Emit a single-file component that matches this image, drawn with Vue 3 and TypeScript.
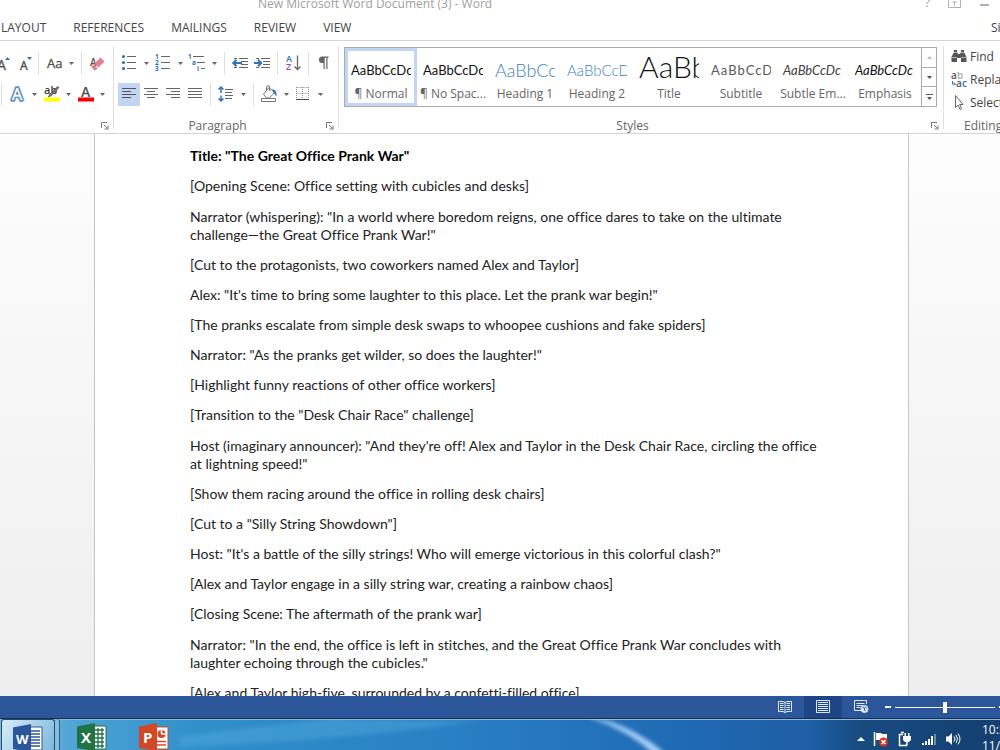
<script setup lang="ts">
interface Tool {
  id: string
  name: string
  menu?: boolean
  sepBefore?: boolean
  active?: boolean
}

const tabs: string[] = ['LAYOUT', 'REFERENCES', 'MAILINGS', 'REVIEW', 'VIEW']

const fontRows: Tool[][] = [
  [
    { id: 'grow', name: 'Grow font' },
    { id: 'shrink', name: 'Shrink font' },
    { id: 'case', name: 'Change case', menu: true, sepBefore: true },
    { id: 'clear', name: 'Clear formatting', sepBefore: true },
  ],
  [
    { id: 'effects', name: 'Text effects', menu: true, sepBefore: true },
    { id: 'highlight', name: 'Highlight colour', menu: true },
    { id: 'color', name: 'Font colour', menu: true },
  ],
]

const paragraphRows: Tool[][] = [
  [
    { id: 'bullets', name: 'Bullets', menu: true },
    { id: 'numbers', name: 'Numbering', menu: true },
    { id: 'multilevel', name: 'Multilevel list', menu: true },
    { id: 'outdent', name: 'Decrease indent', sepBefore: true },
    { id: 'indent', name: 'Increase indent' },
    { id: 'sort', name: 'Sort', sepBefore: true },
    { id: 'marks', name: 'Show paragraph marks', sepBefore: true },
  ],
  [
    { id: 'left', name: 'Align left', active: true },
    { id: 'center', name: 'Center' },
    { id: 'right', name: 'Align right' },
    { id: 'justify', name: 'Justify' },
    { id: 'spacing', name: 'Line spacing', menu: true, sepBefore: true },
    { id: 'shading', name: 'Shading', menu: true, sepBefore: true },
    { id: 'borders', name: 'Borders', menu: true },
  ],
]

const groups = [
  { name: '', key: 'font', rows: fontRows },
  { name: 'Paragraph', key: 'paragraph', rows: paragraphRows },
]

const sans = `font-family="Open Sans, sans-serif"`
const icons: Record<string, string> = {
  grow: `<text x="7" y="18" font-size="14" fill="#505050" stroke="#505050" stroke-width=".3" ${sans}>A</text><path d="M15 8l2.500-3 2.500 3z" fill="#2f73b7"/>`,
  shrink: `<text x="8" y="18" font-size="12" fill="#505050" stroke="#505050" stroke-width=".4" ${sans}>A</text><path d="M15 5h5l-2.500 3z" fill="#2f73b7"/>`,
  case: `<text x="4" y="16" font-size="13" fill="#505050" stroke="#505050" stroke-width=".3" ${sans}>Aa</text>`,
  clear: `<text x="4" y="14" font-size="10" font-weight="600" fill="#505050" ${sans}>A</text><path d="M14.500 5.500l4 4-6 6-4-4z" fill="#e57f90"/><path d="M7.700 12.300l4 4-2 2H8.200l-2.400-2.500v-1.600z" fill="#e57f90"/>`,
  effects: `<text x="6" y="17" font-size="16" font-weight="400" fill="none" stroke="#b7d3ee" stroke-width="4.500" stroke-linejoin="round" ${sans}>A</text><text x="6" y="17" font-size="16" font-weight="400" fill="#fff" stroke="#3b78b5" stroke-width="2.800" stroke-linejoin="round" ${sans}>A</text><text x="6" y="17" font-size="16" font-weight="400" fill="#fff" stroke="#fff" stroke-width=".5" ${sans}>A</text>`,
  highlight: `<text x="4" y="11" font-size="11" font-weight="600" fill="#404040" ${sans}>ab</text><path d="M19 4.500l-7.500 8-3 1.500 1-2.500 8-8z" fill="#777" stroke="#555" stroke-width=".8"/><path d="M4 14.500h16v4H4z" fill="#ff0"/>`,
  color: `<text x="7" y="13.500" font-size="14" font-weight="600" fill="#505050" ${sans}>A</text><path d="M4 14.500h16v4H4z" fill="#f00"/>`,
  bullets: `<g fill="#2f73b7"><circle cx="5.500" cy="4.500" r="1.600"/><circle cx="5.500" cy="10.500" r="1.600"/><circle cx="5.500" cy="16.500" r="1.600"/></g><path d="M9 4.500h9M9 10.500h9M9 16.500h9" stroke="#666" />`,
  numbers: `<g fill="#2f73b7" font-size="6.500" font-weight="700" ${sans}><text x="3" y="7">1</text><text x="3" y="13">2</text><text x="3" y="19">3</text></g><path d="M9 4.500h9M9 10.500h9M9 16.500h9" stroke="#666"/>`,
  multilevel: `<g fill="#2f73b7" font-size="6.500" font-weight="700" ${sans}><text x="2" y="7">1</text><text x="6" y="13">a</text><text x="11" y="19">i</text></g><path d="M7 4.500h11M11 10.500h8M15 16.500h4" stroke="#666"/>`,
  outdent: `<path d="M10 6.500h9M12 9.500h7M12 12.500h7M10 15.500h9M5 6.500h3M5 15.500h3" stroke="#666"/><path d="M13 11H5M7.500 7.800L4.300 11l3.200 3.200" fill="none" stroke="#2f73b7" stroke-width="2"/>`,
  indent: `<path d="M10 6.500h9M12 9.500h7M12 12.500h7M10 15.500h9M5 6.500h3M5 15.500h3" stroke="#666"/><path d="M3 11h7M7 7.800l3.200 3.200L7 14.200" fill="none" stroke="#2f73b7" stroke-width="2"/>`,
  sort: `<text x="4" y="10" font-size="9" font-weight="600" fill="#2f73b7" ${sans}>A</text><text x="4" y="18" font-size="9" font-weight="600" fill="#8a4fae" ${sans}>Z</text><path d="M15.500 3.500v14M12.500 14.500l3 3 3-3" fill="none" stroke="#666" stroke-width="1.300"/>`,
  marks: `<path d="M8.500 4.500h7v1.200h-1V17h-1.200V5.700h-1.600V17h-1.200v-6H9a3.300 3.300 0 0 1-.5-6.500z" fill="#666"/>`,
  left: `<path d="M4 5.500h14M4 8.500h9M4 11.500h14M4 14.500h9" stroke="#555"/>`,
  center: `<path d="M4 5.500h14M7 8.500h8M4 11.500h14M7 14.500h8" stroke="#666"/>`,
  right: `<path d="M4 5.500h14M9 8.500h9M4 11.500h14M9 14.500h9" stroke="#666"/>`,
  justify: `<path d="M4 5.500h14M4 8.500h14M4 11.500h14M4 14.500h14" stroke="#666"/>`,
  spacing: `<path d="M10 6.500h8M10 9.500h7M10 12.500h8M10 15.500h7" stroke="#666"/><path d="M6 4v6M6 12.500v6M3.500 6.500L6 4l2.500 2.500M3.500 15.500L6 18l2.500-2.500" fill="none" stroke="#2f73b7" stroke-width="1.500"/>`,
  shading: `<path d="M5.500 11L11 4.500l5.500 5-5 5.500h-3z" fill="#fff" stroke="#777"/><path d="M8.500 8V4.500a1.600 1.600 0 0 1 3.200 0V8" fill="none" stroke="#666"/><path d="M14 6.500c3-.5 5 2 4.500 7l-3-4z" fill="#2f73b7"/><path d="M3.500 15.500h14v3h-14z" fill="#fff" stroke="#777"/>`,
  borders: `<path d="M4.500 4.500h12M4.500 10.500h12M4.500 4v12M10.500 4v12M16.500 4v12" stroke="#888" stroke-dasharray="1 1"/><path d="M4 16.500h13" stroke="#444"/>`,
}

const styles = [
  { name: '¶ Normal', cls: 'normal', sample: 'AaBbCcDc', on: true },
  { name: '¶ No Spac...', cls: 'normal', sample: 'AaBbCcDc' },
  { name: 'Heading 1', cls: 'heading1', sample: 'AaBbCc' },
  { name: 'Heading 2', cls: 'heading2', sample: 'AaBbCcD' },
  { name: 'Title', cls: 'title', sample: 'AaBb' },
  { name: 'Subtitle', cls: 'subtitle', sample: 'AaBbCcD' },
  { name: 'Subtle Em...', cls: 'subtle', sample: 'AaBbCcDc' },
  { name: 'Emphasis', cls: 'emphasis', sample: 'AaBbCcDc' },
]

const script: { text: string; long?: boolean }[] = [
  { text: '[Opening Scene: Office setting with cubicles and desks]' },
  { text: 'Narrator (whispering): "In a world where boredom reigns, one office dares to take on the ultimate challenge—the Great Office Prank War!"', long: true },
  { text: '[Cut to the protagonists, two coworkers named Alex and Taylor]' },
  { text: 'Alex: "It\'s time to bring some laughter to this place. Let the prank war begin!"' },
  { text: '[The pranks escalate from simple desk swaps to whoopee cushions and fake spiders]' },
  { text: 'Narrator: "As the pranks get wilder, so does the laughter!"' },
  { text: '[Highlight funny reactions of other office workers]' },
  { text: '[Transition to the "Desk Chair Race" challenge]' },
  { text: 'Host (imaginary announcer): "And they\'re off! Alex and Taylor in the Desk Chair Race, circling the office at lightning speed!"', long: true },
  { text: '[Show them racing around the office in rolling desk chairs]' },
  { text: '[Cut to a "Silly String Showdown"]' },
  { text: 'Host: "It\'s a battle of the silly strings! Who will emerge victorious in this colorful clash?"' },
  { text: '[Alex and Taylor engage in a silly string war, creating a rainbow chaos]' },
  { text: '[Closing Scene: The aftermath of the prank war]' },
  { text: 'Narrator: "In the end, the office is left in stitches, and the Great Office Prank War concludes with laughter echoing through the cubicles."', long: true },
  { text: '[Alex and Taylor high-five, surrounded by a confetti-filled office]' },
]
</script>

<template>
  <div class="app">
    <header class="titlebar">
      <span class="doc-name">New Microsoft Word Document (3) - Word</span>
      <div class="window-tools">
        <button class="plain" aria-label="Help">?</button>
        <button class="plain" aria-label="Ribbon display options">
          <svg width="14" height="12" viewBox="0 0 14 12" fill="none" stroke="#b0b0b0"><path d="M.5.500h12v10H.500zM.500 2.500h12M6.500 9V4M4.500 6l2-2 2 2" /></svg>
        </button>
        <button class="plain" aria-label="Minimize">
          <svg width="10" height="12" viewBox="0 0 10 12"><path d="M0 7h9v2H0z" fill="#b0b0b0" /></svg>
        </button>
      </div>
    </header>

    <nav class="tabs">
      <button v-for="t in tabs" :key="t" class="plain tab">{{ t }}</button>
      <a class="signin" href="#">Sign in</a>
    </nav>

    <div class="ribbon">
      <section v-for="g in groups" :key="g.key" class="group" :class="g.key">
        <div class="rows">
          <div v-for="(row, r) in g.rows" :key="r" class="row">
            <template v-for="t in row" :key="t.id">
              <i v-if="t.sepBefore" class="sep"></i>
              <button class="plain tool" :class="{ active: t.active }" :aria-label="t.name">
                <svg width="22" height="23" viewBox="0 0 22 23" v-html="icons[t.id]"></svg>
              </button>
              <button v-if="t.menu" class="plain arrow" :aria-label="t.name + ' options'">
                <svg width="5" height="3" viewBox="0 0 5 3"><path d="M0 0h5L2.500 3z" fill="#666" /></svg>
              </button>
            </template>
          </div>
        </div>
        <footer class="caption">
          <span>{{ g.name }}</span>
          <button class="plain launcher" :aria-label="g.key + ' settings'">
            <svg width="8" height="8" viewBox="0 0 8 8" fill="none" stroke="#777"><path d="M.5 6V.500H6M3 3l3.500 3.500M7 3.500V7H3.500" /></svg>
          </button>
        </footer>
      </section>

      <section class="group styles">
        <div class="gallery">
          <button v-for="s in styles" :key="s.name" class="plain style" :class="{ on: s.on }">
            <span class="sample" :class="s.cls">{{ s.sample }}</span>
            <span class="style-name">{{ s.name }}</span>
          </button>
          <div class="scroller">
            <button class="plain" aria-label="Previous styles"><svg width="5" height="3" viewBox="0 0 5 3"><path d="M0 3h5L2.500 0z" fill="#bbb" /></svg></button>
            <button class="plain" aria-label="Next styles"><svg width="5" height="3" viewBox="0 0 5 3"><path d="M0 0h5L2.500 3z" fill="#555" /></svg></button>
            <button class="plain" aria-label="More styles"><svg width="7" height="6" viewBox="0 0 7 6"><path d="M0 0h7v1H0zM1 3h5L3.500 6z" fill="#555" /></svg></button>
          </div>
        </div>
        <footer class="caption">
          <span>Styles</span>
          <button class="plain launcher" aria-label="Styles settings">
            <svg width="8" height="8" viewBox="0 0 8 8" fill="none" stroke="#777"><path d="M.5 6V.500H6M3 3l3.500 3.500M7 3.500V7H3.500" /></svg>
          </button>
        </footer>
      </section>

      <section class="group editing">
        <div class="commands">
          <button class="plain command">
            <svg width="16" height="16" viewBox="0 0 16 16" fill="#555"><path d="M3 1h3v2l1 2h2l1-2V1h3v2l2.500 5v5H10V9H6v4H.500V8L3 3z" /><path d="M3 3.500h3M10 3.500h3M1 8.500h5M10 8.500h5" stroke="#ddd" stroke-width=".7" /></svg>
            <span>Find</span>
          </button>
          <button class="plain command">
            <svg width="16" height="16" viewBox="0 0 16 16" font-family="Open Sans, sans-serif" font-size="10" font-weight="600"><text x="0" y="7" fill="#555">a</text><text x="6" y="7" fill="#aaa">b</text><text x="5" y="15" fill="#555">a</text><text x="11" y="15" fill="#2f73b7">c</text><path d="M1.500 9v3H4M3 10.500L4.500 12 3 13.500" fill="none" stroke="#2f73b7" /></svg>
            <span>Replace</span>
          </button>
          <button class="plain command">
            <svg width="16" height="16" viewBox="0 0 16 16"><path d="M4.500.500v12l2.500-2.500 2 4.500 1.700-.8-2-4.200h3.300z" fill="#fff" stroke="#666" /></svg>
            <span>Select</span>
          </button>
        </div>
        <footer class="caption"><span>Editing</span></footer>
      </section>
    </div>

    <main class="workspace">
      <article class="page">
        <h1>Title: "The Great Office Prank War"</h1>
        <p v-for="(p, i) in script" :key="i" :class="{ long: p.long }">{{ p.text }}</p>
      </article>
    </main>

    <div class="statusbar">
      <button class="plain view" aria-label="Read mode">
        <svg width="14" height="14" viewBox="0 0 14 14" fill="none" stroke="#dfe8f5"><path d="M.5 1.500H5l2 1 2-1h4.500v10H9l-2 1-2-1H.500zM7 2v11M2 3.500h3.500M2 5.500h3.500M2 7.500h3.500M2 9.500h3.500M8.500 3.500H12M8.500 5.500H12M8.500 7.500H12M8.500 9.500H12" /></svg>
      </button>
      <button class="plain view current" aria-label="Print layout">
        <svg width="14" height="14" viewBox="0 0 14 14" fill="none" stroke="#dfe8f5"><path d="M.5.500h13v12H.500zM2 2.500h10M2 4.500h10M2 6.500h10M2 8.500h10M2 10.500h10" /></svg>
      </button>
      <button class="plain view" aria-label="Web layout">
        <svg width="15" height="14" viewBox="0 0 15 14" fill="none" stroke="#dfe8f5"><path d="M7 10.500H.500V.500h12V4M2.500 3.500h8M2.500 5.500h6M2.500 7.500h4" /><circle cx="10.500" cy="9" r="3.500" fill="#dfe8f5" /><path d="M8.500 7.500l2 .5v2l1 1M11 6.500l2 2" stroke="#2b579a" /></svg>
      </button>
      <button class="plain zoom-out" aria-label="Zoom out"></button>
      <input class="zoom" type="range" min="0" max="100" value="50" aria-label="Zoom" />
      <button class="plain zoom-in" aria-label="Zoom in"></button>
    </div>

    <div class="taskbar">
      <svg class="streak" viewBox="0 0 1000 32" preserveAspectRatio="none" aria-hidden="true">
        <defs>
          <filter id="soft" x="-20%" y="-50%" width="140%" height="200%"><feGaussianBlur stdDeviation="2" /></filter>
        </defs>
        <path d="M180 28Q330 24 480 2L330 0Q270 6 180 18z" fill="#5db4e0" opacity=".35" filter="url(#soft)" />
        <path d="M590-2Q634 6 672 42L654 36Q630 12 590-2z" fill="#a9d2fa" stroke="#a9d2fa" filter="url(#soft)" />
      </svg>
      <button class="plain task running" aria-label="Word">
        <svg width="30" height="28" viewBox="0 0 30 28"><path d="M16 3h13v23H16z" fill="#fff" stroke="#2b579a" /><path d="M18 7h9M18 10h9M18 13h9M18 16h9M18 19h9M18 22h9" stroke="#2b579a" stroke-width="1.300" /><path d="M0 3.500L18 0v28L0 25z" fill="#2b579a" /><text x="3" y="20" font-family="Open Sans, sans-serif" font-size="13" font-weight="700" fill="#fff">W</text></svg>
      </button>
      <button class="plain task" aria-label="Excel">
        <svg width="30" height="28" viewBox="0 0 30 28"><path d="M16 3h13v23H16z" fill="#fff" stroke="#217346" /><path d="M18 7h9M18 11h9M18 15h9M18 19h9M18 23h9M21 5v20M25 5v20" stroke="#217346" stroke-width="1.300" /><path d="M0 3.500L18 0v28L0 25z" fill="#217346" /><text x="4" y="20" font-family="Open Sans, sans-serif" font-size="15" font-weight="700" fill="#fff">X</text></svg>
      </button>
      <button class="plain task" aria-label="PowerPoint">
        <svg width="30" height="28" viewBox="0 0 30 28"><path d="M16 4h13v22H16z" fill="#fff" stroke="#d24726" /><circle cx="22.500" cy="11" r="4" fill="#d24726" /><path d="M22.500 11V6.500M22.500 11H27" stroke="#fff" stroke-width="1.500" /><path d="M18 18.500h9M18 22h9" stroke="#d24726" stroke-width="1.500" /><path d="M0 3.500L18 0v28L0 25z" fill="#d24726" /><text x="4" y="20" font-family="Open Sans, sans-serif" font-size="15" font-weight="700" fill="#fff">P</text></svg>
      </button>
      <div class="tray">
        <button class="plain" aria-label="Show hidden icons"><svg width="8" height="16" viewBox="0 0 8 16"><path d="M0 10h8L4 6z" fill="#fff" /></svg></button>
        <button class="plain" aria-label="Action center"><svg width="16" height="16" viewBox="0 0 16 16"><path d="M1.500 1v14" stroke="#fff" stroke-width="1.500" /><path d="M3 2h5l1 1h5v7H8L7 9H3z" fill="#fff" /><circle cx="10.500" cy="11" r="4.500" fill="#d8301f" /><path d="M8.500 9l4 4M12.500 9l-4 4" stroke="#fff" stroke-width="1.500" /></svg></button>
        <button class="plain" aria-label="Power"><svg width="16" height="16" viewBox="0 0 16 16"><path d="M6 3.500H2.500v11h7V13M4 1.500h3" fill="none" stroke="#fff" stroke-width="1.500" /><path d="M6 5h8v4l-2 2H8L6 9zM7.500 2h1.500v3H7.500zM11 2h1.500v3H11z" fill="#fff" /><path d="M10 11v3" stroke="#fff" stroke-width="1.500" /></svg></button>
        <button class="plain" aria-label="Network"><svg width="16" height="16" viewBox="0 0 16 16"><path d="M1 12h2v2H1zM4 10h2v4H4zM7 8h2v6H7zM10 5h2v9h-2z" fill="#fff" /><path d="M13 3h2v11h-2z" fill="#6f8dad" /></svg></button>
        <button class="plain" aria-label="Volume"><svg width="16" height="16" viewBox="0 0 16 16"><path d="M1 5.500h2.500L7 2v12l-3.500-3.500H1z" fill="#fff" /><path d="M9 5.500q2 2.500 0 5M11 4q3 4 0 8M13 2.500q4 5.500 0 11" fill="none" stroke="#fff" /></svg></button>
      </div>
      <div class="clock"><span>10:26 AM</span><span>11/6/2023</span></div>
    </div>
  </div>
</template>

<style>
html,
body {
  margin: 0;
  overflow: hidden;
}
</style>

<style scoped>
.app {
  height: 100vh;
  display: flex;
  flex-direction: column;
  overflow: hidden;
  background: #fff;
  color: #444;
  font: 12px/16px "Open Sans", "Noto Sans", sans-serif;
}
.plain {
  display: flex;
  align-items: center;
  justify-content: center;
  margin: 0;
  padding: 0;
  border: 0;
  background: none;
  color: inherit;
  font: inherit;
  white-space: nowrap;
}
svg {
  display: block;
  flex: none;
}
.titlebar {
  height: 16px;
  flex: none;
  display: flex;
  align-items: flex-start;
  color: #a0a0a0;
}
.doc-name {
  margin: -4px auto 0 258px;
}
.window-tools {
  display: flex;
  gap: 18px;
  margin: -5px 10px 0 0;
}
.tabs {
  height: 24px;
  flex: none;
  display: flex;
  align-items: center;
  gap: 27px;
  padding-left: 1px;
  border-bottom: 1px solid #d4d4d4;
}
.signin {
  margin-left: auto;
  width: 9px;
  overflow: hidden;
  color: inherit;
  text-decoration: none;
  white-space: nowrap;
}
.ribbon {
  height: 92px;
  flex: none;
  display: flex;
  border-bottom: 1px solid #d4d4d4;
}
.group {
  display: flex;
  flex-direction: column;
  justify-content: space-between;
  position: relative;
  flex: none;
  box-sizing: border-box;
  padding-top: 6px;
}
.group:not(.editing)::after {
  content: "";
  position: absolute;
  right: 0;
  top: 5px;
  bottom: 4px;
  width: 1px;
  background: #e1e1e1;
}
.font {
  width: 114px;
}
.paragraph {
  width: 225px;
}
.styles {
  flex: 1;
  min-width: 0;
}
.editing {
  width: 56px;
}
.rows {
  display: flex;
  flex-direction: column;
  gap: 8px;
  padding: 5px 6px 0 4px;
}
.row {
  display: flex;
  height: 23px;
}
.font .row {
  justify-content: flex-end;
}
.tool {
  width: 22px;
  flex: none;
}
.active {
  background: #c2d5f2;
}
.arrow {
  width: 12px;
  flex: none;
}
.sep {
  width: 1px;
  flex: none;
  margin: 0 4px;
  background: #e1e1e1;
}
.caption {
  display: flex;
  justify-content: center;
  position: relative;
  height: 15px;
  padding-right: 18px;
  color: #666;
}
.launcher {
  position: absolute;
  right: 5px;
  top: 4px;
}
.gallery {
  display: flex;
  height: 58px;
  margin: 0 7px 0 5px;
  border: 1px solid #ababab;
}
.style {
  flex: 1;
  min-width: 0;
  flex-direction: column;
  justify-content: flex-end;
  box-sizing: border-box;
  border: 3px solid transparent;
  overflow: hidden;
}
.on {
  border-color: #c2d5f2;
}
.sample {
  width: 60px;
  height: 34px;
  overflow: hidden;
  text-align: left;
  color: #111;
  font-family: Lato, sans-serif;
  font-size: 13px;
  line-height: 36px;
}
.sample.heading1 {
  color: #3f82c0;
  font-size: 18px;
}
.sample.heading2 {
  color: #3f82c0;
  font-size: 15px;
}
.sample.heading1,
.sample.heading2,
.sample.title {
  font-weight: 300;
}
.sample.title {
  font-size: 30px;
  line-height: 28px;
}
.sample.subtitle {
  color: #5a5a5a;
  letter-spacing: 1px;
}
.sample.subtle {
  color: #404040;
  font-style: italic;
}
.sample.emphasis {
  font-style: italic;
}
.style-name {
  height: 17px;
  color: #666;
}
.scroller {
  width: 14px;
  flex: none;
  display: flex;
  flex-direction: column;
  border-left: 1px solid #ababab;
}
.scroller button {
  flex: 1;
}
.scroller button + button {
  border-top: 1px solid #ababab;
}
.commands {
  display: flex;
  flex-direction: column;
  gap: 3px;
  padding-left: 7px;
  overflow: hidden;
}
.command {
  height: 20px;
  justify-content: flex-start;
  gap: 3px;
}
.editing .caption {
  justify-content: flex-start;
  padding: 0 0 0 20px;
  overflow: hidden;
}
.workspace {
  flex: 1;
  min-height: 0;
  overflow: hidden;
  padding: 0 91px 0 94px;
  background: linear-gradient(#fdfdfd, #eee);
}
.page {
  min-height: 100%;
  box-sizing: border-box;
  padding: 13px 84px 0 95px;
  border: solid #c6c6c6;
  border-width: 0 1px;
  background: #fff;
  color: #222;
  font: 14px/18px Lato, sans-serif;
  font-variant-ligatures: none;
}
h1 {
  margin: 0 0 12px;
  font: inherit;
  font-weight: 700;
  color: #000;
}
p {
  margin: 0 0 12px;
}
.long {
  padding-top: 1px;
}
.statusbar {
  height: 22px;
  flex: none;
  display: flex;
  align-items: stretch;
  justify-content: flex-end;
  background: #2b579a;
}
.view {
  width: 38px;
}
.current {
  background: #1e4686;
}
.zoom-out {
  width: 6px;
  height: 2px;
  margin: 10px 4px 0 5px;
  background: #fff;
}
.zoom {
  appearance: none;
  width: 100px;
  height: 22px;
  margin: 0 4px 0 0;
  background: linear-gradient(#fff, #fff) center / 100% 1px no-repeat;
}
.zoom::-webkit-slider-thumb {
  appearance: none;
  width: 4px;
  height: 11px;
  background: #fff;
}
.zoom-in {
  width: 1px;
  height: 2px;
  margin-top: 10px;
  background: #fff;
}
.taskbar {
  height: 32px;
  flex: none;
  display: flex;
  position: relative;
  box-sizing: border-box;
  border-top: 1px solid #16304f;
  box-shadow: inset 0 1px #8fb6dc;
  overflow: hidden;
  color: #fff;
  background: linear-gradient(90deg, #7dbfe0 0, #4ba3d4 8%, #2f8fca 20%, #2980c4 45%, #1f6ab4 68%, #1e5ea5 81%, #174b80 86%, #143f70 100%);
}
.streak {
  position: absolute;
  inset: 0;
  width: 100%;
  height: 100%;
}
.task {
  position: relative;
  width: 62px;
  align-items: flex-start;
  padding-top: 4px;
}
.running {
  width: 54px;
  margin: 0 6px 0 1px;
  border: 1px solid #24486e;
  border-bottom: 0;
  border-radius: 3px 3px 0 0;
  background: linear-gradient(120deg, #d8ecf7, #7cb9dc);
  box-shadow: 4px 0 #86c0e0, 5px 0 #2f5f8a;
}
.tray {
  position: relative;
  display: flex;
  gap: 8px;
  margin-left: auto;
  padding-top: 8px;
}
.clock {
  position: relative;
  display: flex;
  flex-direction: column;
  width: 18px;
  margin-left: 21px;
  padding-top: 3px;
  overflow: hidden;
  white-space: nowrap;
}
</style>
